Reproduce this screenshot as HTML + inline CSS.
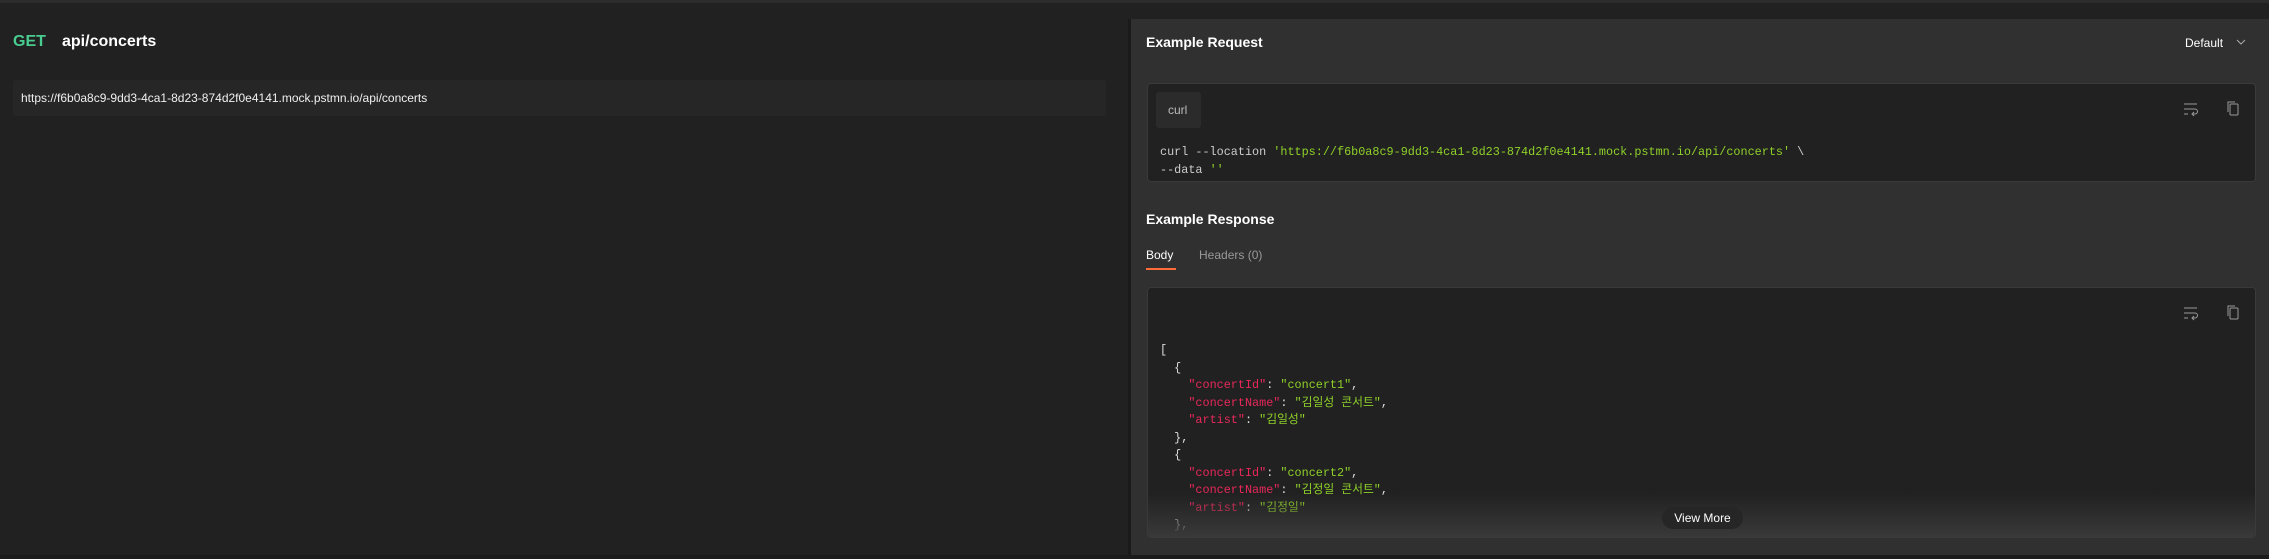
<!DOCTYPE html>
<html><head><meta charset="utf-8"><style>
*{margin:0;padding:0;box-sizing:border-box}
body{width:2269px;height:559px;background:#212121;font-family:"Liberation Sans","Noto Sans CJK KR",sans-serif;color:#fff;position:relative;overflow:hidden}
.abs{position:absolute}
.mono{font-family:"Liberation Mono","Noto Sans CJK KR",monospace;font-size:11.8px}
.k{color:#e8285a}.s{color:#8fd12a}.p{color:#ddd}
</style></head><body>
<div class="abs" style="left:0;top:0;width:2269px;height:3px;background:#2c2c2c"></div>
<div class="abs" style="left:13px;top:33px;font-size:16px;font-weight:bold;color:#49cc90">GET</div>
<div class="abs" style="left:62px;top:33px;font-size:16px;font-weight:bold;color:#fff">api/concerts</div>
<div class="abs" style="left:13px;top:80px;width:1093px;height:36px;background:#262626;border-radius:3px"></div>
<div class="abs" style="left:21px;top:91px;font-size:12px;color:#f0f0f0">https://f6b0a8c9-9dd3-4ca1-8d23-874d2f0e4141.mock.pstmn.io/api/concerts</div>
<div class="abs" style="left:1128px;top:19px;width:3px;height:540px;background:#1a1a1a"></div>
<div class="abs" style="left:1131px;top:19px;width:1138px;height:536px;background:#303030"></div>
<div class="abs" style="left:0;top:555px;width:2269px;height:4px;background:#1c1c1c"></div>
<div class="abs" style="left:1146px;top:34px;font-size:14px;font-weight:bold">Example Request</div>
<div class="abs" style="left:2185px;top:36px;font-size:12px">Default</div>
<svg class="abs" style="left:2236px;top:38px" width="10" height="8"><path d="M1 2l4 4 4-4" stroke="#aaa" fill="none"/></svg>
<div class="abs" style="left:1147px;top:83px;width:1109px;height:99px;background:#212121;border:1px solid #3a3a3a;border-radius:4px"></div>
<div class="abs" style="left:1156px;top:92px;width:45px;height:36px;background:#2b2b2b;border-radius:3px"></div>
<div class="abs" style="left:1168px;top:103px;font-size:12px;color:#bbb">curl</div>
<svg class="abs" style="left:2183px;top:101px" width="16" height="16"><path d="M1 3h13M1 8h11a2.5 2.5 0 010 5H9M11 11l-2 2 2 2M1 13h4" stroke="#999" fill="none"/></svg>
<svg class="abs" style="left:2225px;top:100px" width="16" height="16"><rect x="5" y="4" width="8" height="11" rx="1" stroke="#999" fill="none"/><path d="M3 12V2h7" stroke="#999" fill="none"/></svg>
<div class="abs mono" style="left:1160px;top:143px;color:#ccc;line-height:18px;white-space:pre">curl --location <span class="s">'https://f6b0a8c9-9dd3-4ca1-8d23-874d2f0e4141.mock.pstmn.io/api/concerts'</span> \
--data <span class="s">''</span></div>
<div class="abs" style="left:1146px;top:211px;font-size:14px;font-weight:bold">Example Response</div>
<div class="abs" style="left:1146px;top:248px;font-size:12px">Body</div>
<div class="abs" style="left:1199px;top:248px;font-size:12px;color:#999">Headers (0)</div>
<div class="abs" style="left:1146px;top:268px;width:30px;height:2px;background:#ff6c37"></div>
<div class="abs" style="left:1147px;top:287px;width:1109px;height:251px;background:#212121;border:1px solid #3a3a3a;border-radius:4px;overflow:hidden">
<div class="abs mono" style="left:12px;top:54px;line-height:17.5px;white-space:pre;color:#ddd">[
  {
    <span class="k">"concertId"</span>: <span class="s">"concert1"</span>,
    <span class="k">"concertName"</span>: <span class="s">"김일성 콘서트"</span>,
    <span class="k">"artist"</span>: <span class="s">"김일성"</span>
  },
  {
    <span class="k">"concertId"</span>: <span class="s">"concert2"</span>,
    <span class="k">"concertName"</span>: <span class="s">"김정일 콘서트"</span>,
    <span class="k">"artist"</span>: <span class="s">"김정일"</span>
  },</div>
<div class="abs" style="left:0;top:205px;width:1109px;height:46px;background:linear-gradient(rgba(58,58,58,0),#3a3a3a)"></div>
<div class="abs" style="left:514px;top:219px;width:81px;height:22px;background:#262626;border-radius:11px;font-size:12px;text-align:center;line-height:22px">View More</div>
</div>
<svg class="abs" style="left:2183px;top:305px" width="16" height="16"><path d="M1 3h13M1 8h11a2.5 2.5 0 010 5H9M11 11l-2 2 2 2M1 13h4" stroke="#999" fill="none"/></svg>
<svg class="abs" style="left:2225px;top:304px" width="16" height="16"><rect x="5" y="4" width="8" height="11" rx="1" stroke="#999" fill="none"/><path d="M3 12V2h7" stroke="#999" fill="none"/></svg>
</body></html>
